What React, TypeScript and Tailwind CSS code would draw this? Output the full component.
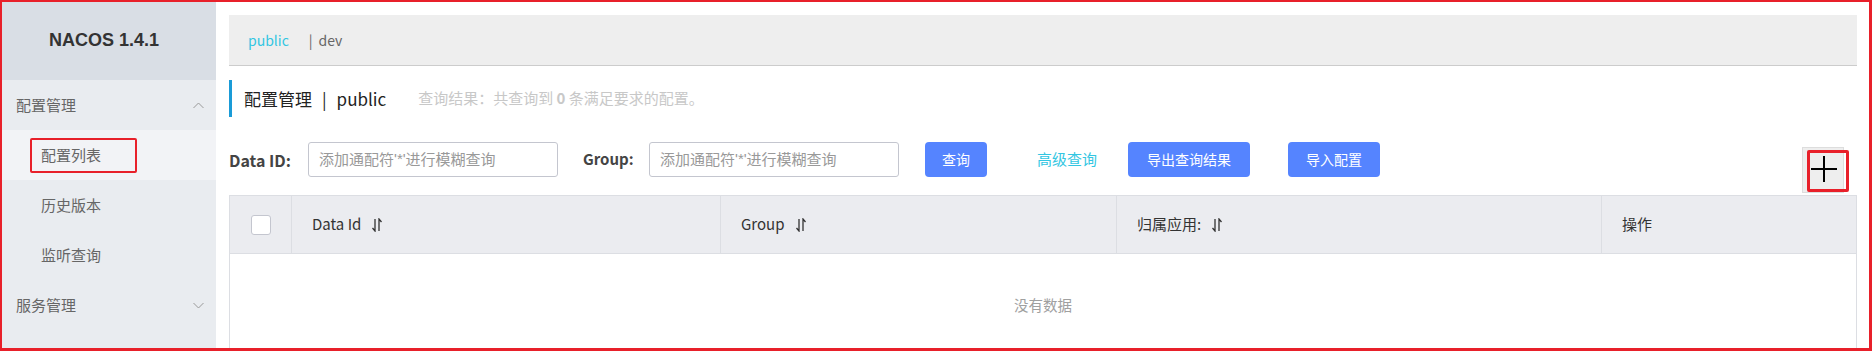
import React from "react";

const CJK = '"Noto Sans CJK SC", "Noto Sans", sans-serif';

function SortIcon() {
  return (
    <svg width="12" height="14" viewBox="0 0 12 14" className="ml-[10px]" fill="none" stroke="#333" strokeWidth="1.3">
      <path d="M4 1 L4 13 L1.5 10" />
      <path d="M8 13 L8 1 L10.5 4" />
    </svg>
  );
}

function Chevron({ up }: { up: boolean }) {
  return (
    <svg width="11" height="7" viewBox="0 0 11 7" fill="none" stroke="#999" strokeWidth="1">
      {up ? <path d="M0.5 6 L5.5 1 L10.5 6" /> : <path d="M0.5 1 L5.5 6 L10.5 1" />}
    </svg>
  );
}

function Placeholder() {
  return (
    <div className="w-[250px] h-[35px] shrink-0 border border-[#c4c6cf] rounded-[3px] flex items-center pl-[10px] text-[15px] text-[#999]">
      添加通配符<span style={{ fontFamily: '"Liberation Sans", Arial, sans-serif' }}>'*'</span>进行模糊查询
    </div>
  );
}

export default function App() {
  return (
    <div
      className="relative w-[1872px] h-[351px] overflow-hidden flex bg-white"
      style={{ fontFamily: CJK }}
    >
      {/* Sidebar */}
      <aside className="w-[216px] shrink-0 bg-[#e9ecf0] flex flex-col">
        <div className="h-[80px] shrink-0 bg-[#d9dee5] flex items-center justify-center pr-[8px]">
          <span
            className="text-[18px] font-bold text-[#333]"
            style={{ fontFamily: '"Liberation Sans", Arial, sans-serif' }}
          >
            NACOS 1.4.1
          </span>
        </div>
        <div className="h-[50px] shrink-0 flex items-center justify-between pl-[16px] pr-[12px] text-[15px] text-[#666]">
          <span>配置管理</span>
          <Chevron up />
        </div>
        <div className="h-[50px] shrink-0 bg-[#f2f3f6] flex items-center pl-[30px]">
          <div className="h-[35px] w-[107px] border-2 border-[#e8202a] rounded-[2px] pl-[9px] flex items-center text-[15px] text-[#666]">
            配置列表
          </div>
        </div>
        <div className="h-[50px] shrink-0 flex items-center pl-[41px] text-[15px] text-[#666]">历史版本</div>
        <div className="h-[50px] shrink-0 flex items-center pl-[41px] text-[15px] text-[#666]">监听查询</div>
        <div className="h-[50px] shrink-0 flex items-center justify-between pl-[16px] pr-[12px] text-[15px] text-[#666]">
          <span>服务管理</span>
          <Chevron up={false} />
        </div>
      </aside>

      {/* Main */}
      <main className="flex-1 min-w-0 pl-[13px] pr-[15px] pt-[15px] flex flex-col">
        <div className="h-[51px] shrink-0 bg-[#eeeeee] border-b border-[#cccccc] flex items-center pl-[19px] text-[14px]">
          <span className="text-[#33c6e2]">public</span>
          <span className="ml-[20px] text-[#666]">|</span>
          <span className="ml-[6px] text-[#666]">dev</span>
        </div>

        <div className="mt-[14px] h-[37px] shrink-0 border-l-[3px] border-[#1a9bd7] pl-[12px] flex items-center">
          <span className="text-[17px] text-[#222]">配置管理</span>
          <span className="text-[17px] text-[#222] ml-[10px]">|</span>
          <span className="text-[17px] text-[#222] ml-[10px]">public</span>
          <span className="ml-[32px] text-[15px] text-[#c8c8c8]">
            查询结果：共查询到 <b className="font-bold">0</b> 条满足要求的配置。
          </span>
        </div>

        <div className="mt-[25px] h-[35px] shrink-0 flex items-center">
          <span className="text-[16px] font-bold text-[#444] w-[79px] shrink-0">Data ID:</span>
          <Placeholder />
          <span className="ml-[25px] text-[15px] font-bold text-[#444] w-[66px] shrink-0">Group:</span>
          <Placeholder />
          <button className="ml-[26px] w-[62px] h-[35px] shrink-0 rounded-[4px] bg-[#5584ff] text-white text-[14px] flex items-center justify-center">
            查询
          </button>
          <span className="ml-[50px] text-[15px] text-[#33c6e2] shrink-0">高级查询</span>
          <button className="ml-[31px] w-[122px] h-[35px] shrink-0 rounded-[4px] bg-[#5584ff] text-white text-[14px] flex items-center justify-center">
            导出查询结果
          </button>
          <button className="ml-[38px] w-[92px] h-[35px] shrink-0 rounded-[4px] bg-[#5584ff] text-white text-[14px] flex items-center justify-center">
            导入配置
          </button>
          <div className="ml-auto mr-[13px] self-start mt-[5px] relative w-[42px] h-[46px] shrink-0 bg-[#eeeeee] border border-[#dddddd] flex items-center justify-center">
            <div className="absolute left-[4px] top-[2px] w-[42px] h-[42px] border-[3px] border-[#e8202a] rounded-[2px]" />
            <svg width="26" height="26" viewBox="0 0 26 26" className="relative ml-[1px] mt-[-2px]">
              <path d="M0 13 H26 M13 0 V26" stroke="#000" strokeWidth="2" />
            </svg>
          </div>
        </div>

        <div className="mt-[18px] shrink-0 border border-[#dcdee3] flex flex-col">
          <div className="h-[58px] shrink-0 bg-[#ebecf0] border-b border-[#dcdee3] flex text-[15px] text-[#333]">
            <div className="w-[62px] shrink-0 border-r border-[#dcdee3] flex items-center justify-center">
              <div className="w-[20px] h-[20px] bg-white border border-[#c4c6cf] rounded-[3px]" />
            </div>
            <div className="w-[429px] shrink-0 border-r border-[#dcdee3] flex items-center pl-[20px]">
              <span>Data Id</span>
              <SortIcon />
            </div>
            <div className="w-[396px] shrink-0 border-r border-[#dcdee3] flex items-center pl-[20px]">
              <span>Group</span>
              <SortIcon />
            </div>
            <div className="w-[485px] shrink-0 border-r border-[#dcdee3] flex items-center pl-[20px]">
              <span>归属应用:</span>
              <SortIcon />
            </div>
            <div className="flex-1 flex items-center pl-[20px]">
              <span>操作</span>
            </div>
          </div>
          <div className="h-[102px] shrink-0 flex items-center justify-center text-[14.5px] text-[#a0a0a0]">
            没有数据
          </div>
        </div>
      </main>

      {/* screenshot annotation frame */}
      <div className="pointer-events-none absolute inset-0 border-t-2 border-l-2 border-r-[3px] border-b-[3px] border-[#e8202a]" />
    </div>
  );
}
